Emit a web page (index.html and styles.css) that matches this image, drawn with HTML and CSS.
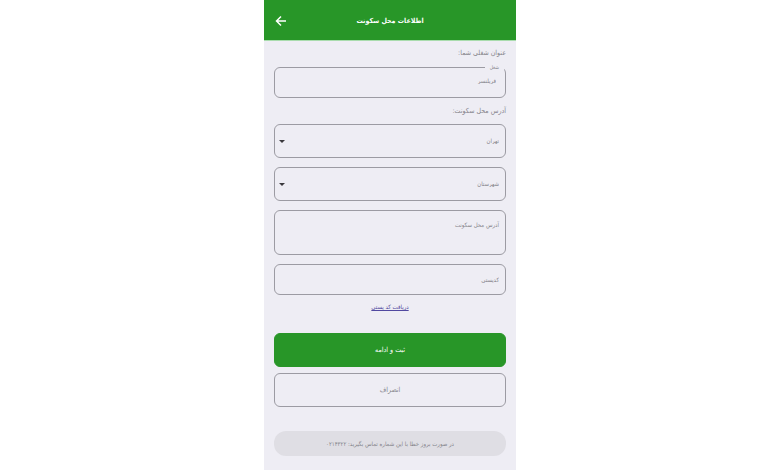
FILE: index.html
```html
<!DOCTYPE html>
<html lang="fa" dir="rtl">
<head>
<meta charset="utf-8">
<meta name="viewport" content="width=device-width, initial-scale=1">
<title>اطلاعات محل سکونت</title>
<link rel="stylesheet" href="styles.css">
</head>
<body>
<div class="screen">
  <header class="bar">
    <h1 class="title">اطلاعات محل سکونت</h1>
    <button class="back" type="button" aria-label="بازگشت">
      <svg viewBox="0 0 12 12" width="12" height="12" aria-hidden="true"><path d="M11 6H1.5M6 1.5L1.5 6L6 10.5" fill="none" stroke="currentColor" stroke-width="1.5"/></svg>
    </button>
  </header>
  <form class="form">
    <h2 class="heading">عنوان شغلی شما:</h2>
    <fieldset class="outlined">
      <legend class="legend"><label for="job">شغل</label></legend>
      <input class="bare" id="job" type="text" value="فریلنسر">
    </fieldset>
    <h2 class="heading heading-address">آدرس محل سکونت:</h2>
    <div class="fields">
      <div class="select">
        <select class="field" aria-label="استان"><option>تهران</option></select>
        <svg class="caret" viewBox="0 0 6 3" width="6" height="3" aria-hidden="true"><path d="M0 0H6L3 3Z" fill="currentColor"/></svg>
      </div>
      <div class="select">
        <select class="field" aria-label="شهرستان"><option>شهرستان</option></select>
        <svg class="caret" viewBox="0 0 6 3" width="6" height="3" aria-hidden="true"><path d="M0 0H6L3 3Z" fill="currentColor"/></svg>
      </div>
      <textarea class="field address" aria-label="آدرس محل سکونت" placeholder="آدرس محل سکونت"></textarea>
      <input class="field postal" type="text" aria-label="کدپستی" placeholder="کدپستی">
    </div>
    <a class="link" href="#">دریافت کد پستی</a>
    <div class="actions">
      <button class="button primary" type="submit">ثبت و ادامه</button>
      <button class="button" type="button">انصراف</button>
    </div>
    <p class="help">در صورت بروز خطا با این شماره تماس بگیرید: ۰۲۱۴۳۲۲</p>
  </form>
</div>
</body>
</html>
```
FILE: styles.css
```css
* {
  box-sizing: border-box;
}

body {
  margin: 0;
  background: #fff;
  color: #85848b;
  font-family: "DejaVu Sans Condensed", "DejaVu Sans", sans-serif;
  font-size: 6px;
}

input,
select,
textarea,
button {
  margin: 0;
  color: inherit;
  font: inherit;
}

.screen {
  max-width: 252px;
  min-height: 100vh;
  margin: 0 auto;
  background: #eeedf4;
}

.bar {
  display: grid;
  grid-template-columns: 12px 1fr 12px;
  align-items: center;
  height: 41px;
  padding: 2px 11px 0;
  border-bottom: 1px solid #a9dcad;
  background: #289628;
  color: #fff;
}

.title {
  grid-column: 2;
  margin: 0;
  font-size: 7px;
  font-weight: 700;
  line-height: 12px;
  text-align: center;
}

.back {
  display: flex;
  padding: 0;
  border: 0;
  background: none;
}

.form {
  display: flex;
  flex-direction: column;
  padding: 6px 10px 14px;
}

.heading {
  margin: 0;
  font-size: 7px;
  font-weight: 400;
  line-height: 12px;
}

.heading-address {
  margin: 7px 0;
}

.outlined {
  min-width: 0;
  height: 34px;
  margin: 5px 0 0;
  padding: 0 1px;
  border: 1px solid #9c9ba3;
  border-radius: 6px;
}

.legend {
  padding: 0 5px;
  font-size: 5px;
  line-height: 6px;
}

.bare {
  display: block;
  width: 100%;
  height: 20px;
  padding: 0 8px;
  border: 0;
  background: none;
}

.fields {
  display: grid;
  gap: 9px;
}

.select {
  position: relative;
}

.field {
  display: block;
  width: 100%;
  height: 34px;
  padding: 0 6px 1px;
  border: 1px solid #9c9ba3;
  border-radius: 6px;
  background: none;
  appearance: none;
}

.caret {
  position: absolute;
  top: calc(50% - 1px);
  left: 5px;
  color: #3a393d;
  pointer-events: none;
}

.address {
  height: 45px;
  padding-top: 9px;
  line-height: 10px;
  resize: none;
}

.postal {
  height: 31px;
}

.field::placeholder {
  color: inherit;
  opacity: 1;
}

.link {
  align-self: center;
  margin-top: 6px;
  color: #5149a0;
  line-height: 12px;
}

.actions {
  display: grid;
  gap: 6px;
  margin-top: 20px;
}

.button {
  height: 34px;
  border: 1px solid #9c9ba3;
  border-radius: 6px;
  background: none;
  font-size: 7px;
}

.primary {
  border-color: #289628;
  background: #289628;
  color: #fff;
}

.help {
  margin: 24px 0 0;
  border-radius: 12px;
  background: #dfdee4;
  line-height: 25px;
  text-align: center;
}
```
